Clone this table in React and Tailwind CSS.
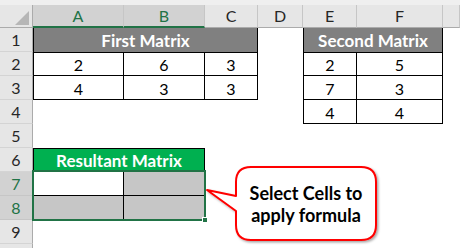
import React from 'react';

// column widths: row header, A, B, C, D, E, F, G
const gridCols = 'grid grid-cols-[33px_91px_81px_53px_45px_54px_86px_17px] grid-rows-[23px_repeat(10,24px)]';

const ColHead = ({ children, sel }) => (
  <div
    className={
      sel
        ? 'flex items-center justify-center bg-[#d2d2d2] text-[#217346] text-[16px] border-r border-[#c6c6c6] border-b-2 border-b-[#217346]'
        : 'flex items-center justify-center bg-[#e6e6e6] text-[#262626] text-[16px] border-r border-[#c6c6c6] border-b border-b-[#ababab]'
    }
  >
    {children}
  </div>
);

const RowHead = ({ n, sel }) => (
  <div
    className={
      sel
        ? 'flex items-center justify-center bg-[#d2d2d2] text-[#217346] text-[16px] border-r border-b border-r-[#ababab] border-b-[#c6c6c6]'
        : 'flex items-center justify-center bg-[#e6e6e6] text-[#262626] text-[16px] border-r border-b border-r-[#ababab] border-b-[#d4d4d4]'
    }
  >
    {n}
  </div>
);

const Cell = ({ children, className = '' }) => (
  <div className={`flex items-center justify-center pt-[2px] text-[16px] text-black ${className}`}>{children}</div>
);

const Callout = () => (
  <>
    <svg className="absolute left-0 top-0 pointer-events-none" width="460" height="248" viewBox="0 0 460 248">
      <defs>
        <filter id="sh" x="-10%" y="-10%" width="130%" height="130%">
          <feDropShadow dx="1.5" dy="1.5" stdDeviation="1" floodColor="#000" floodOpacity="0.35" />
        </filter>
      </defs>
      <path
        d="M251 167 L361 167 Q376 167 376 182 L376 225 Q376 240 361 240 L251 240 Q236 240 236 225 L236 211 L207 190 L236 196 L236 182 Q236 167 251 167 Z"
        fill="#fff"
        stroke="#ff0000"
        strokeWidth="2"
        strokeLinejoin="round"
        filter="url(#sh)"
      />
    </svg>
    <div className="absolute left-[236px] top-[167px] w-[140px] h-[73px] flex flex-col items-center justify-center text-[18px] leading-[22px] font-bold text-black">
      <span>Select Cells to</span>
      <span>apply formula</span>
    </div>
  </>
);

export default function App() {
  return (
    <div className="relative w-[460px] h-[248px] overflow-hidden bg-white font-['Lato',sans-serif]">
      <div className="h-[5px] bg-[#efefef]" />
      <div className={gridCols}>
        {/* header row */}
        <div className="relative bg-[#e6e6e6] border-r border-b border-r-[#ababab] border-b-[#ababab]">
          <svg className="absolute left-0 top-0" width="33" height="23" viewBox="0 0 33 23">
            <polygon points="15,20 29,6 29,20" fill="#b6b6b6" />
          </svg>
        </div>
        <ColHead sel>A</ColHead>
        <ColHead sel>B</ColHead>
        <ColHead>C</ColHead>
        <ColHead>D</ColHead>
        <ColHead>E</ColHead>
        <ColHead>F</ColHead>
        <ColHead />

        {/* row 1 */}
        <RowHead n={1} />
        <div className="col-span-3 flex items-center justify-center pt-[1px] bg-[#808080] text-white font-bold text-[17px] border-l border-r border-black">
          First Matrix
        </div>
        <div />
        <div className="col-span-2 flex items-center justify-center pt-[1px] bg-[#808080] text-white font-bold text-[17px] border-l border-r border-black">
          Second Matrix
        </div>
        <div />

        {/* row 2 */}
        <RowHead n={2} />
        <Cell className="border-l border-t border-r border-b border-black">2</Cell>
        <Cell className="border-t border-r border-b border-black">6</Cell>
        <Cell className="border-t border-r border-b border-black">3</Cell>
        <div />
        <Cell className="border-l border-t border-r border-b border-black">2</Cell>
        <Cell className="border-t border-r border-b border-black">5</Cell>
        <div />

        {/* row 3 */}
        <RowHead n={3} />
        <Cell className="border-l border-r border-b border-black">4</Cell>
        <Cell className="border-r border-b border-black">3</Cell>
        <Cell className="border-r border-b border-black">3</Cell>
        <div />
        <Cell className="border-l border-r border-b border-black">7</Cell>
        <Cell className="border-r border-b border-black">3</Cell>
        <div />

        {/* row 4 */}
        <RowHead n={4} />
        <div />
        <div />
        <div />
        <div />
        <Cell className="border-l border-r border-b border-black">4</Cell>
        <Cell className="border-r border-b border-black">4</Cell>
        <div />

        {/* row 5 */}
        <RowHead n={5} />
        <div className="col-span-7" />

        {/* row 6 */}
        <RowHead n={6} />
        <div className="col-span-2 flex items-center justify-center pt-[1px] bg-[#00b050] text-white font-bold text-[17px] border border-black">
          Resultant Matrix
        </div>
        <div className="col-span-5" />

        {/* rows 7-8 */}
        <RowHead n={7} sel />
        <div className="col-span-2 row-span-2 relative grid grid-cols-[91px_81px] grid-rows-2">
          <div className="bg-white border-r border-b border-black" />
          <div className="bg-[#c6c6c6] border-b border-black" />
          <div className="bg-[#c6c6c6] border-r border-black" />
          <div className="bg-[#c6c6c6]" />
          <div className="absolute -left-[1px] -right-[1px] -top-[2px] -bottom-[1px] border-2 border-[#217346]" />
          <div className="absolute -right-[3px] -bottom-[3px] w-[6px] h-[6px] bg-[#217346] border border-white" />
        </div>
        <div className="col-span-5 row-span-2" />
        <RowHead n={8} sel />

        {/* row 9 */}
        <RowHead n={9} />
        <div className="col-span-7" />

        {/* row 10, only its top edge shows */}
        <RowHead />
        <div className="col-span-7" />
      </div>
      <Callout />
    </div>
  );
}
